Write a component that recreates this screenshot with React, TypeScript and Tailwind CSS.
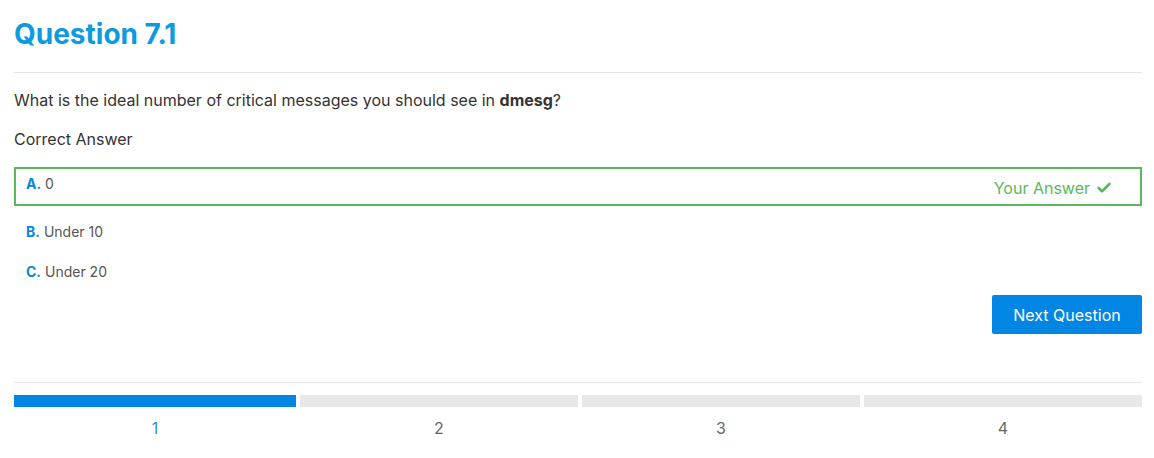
import { Check } from "lucide-react";

const answers = [
  { letter: "A", text: "0", chosen: true },
  { letter: "B", text: "Under 10", chosen: false },
  { letter: "C", text: "Under 20", chosen: false },
];

const steps = [1, 2, 3, 4];

export default function App() {
  return (
    <div className="bg-white pl-[14px] pr-[12px] font-['Inter',sans-serif] text-[#333]">
      <h1 className="pt-[16px] text-[28px] font-bold leading-[36px] text-[#0d9ade]">Question 7.1</h1>
      <hr className="mt-[20px] border-t border-[#e5e5e5]" />

      <p className="mt-[16px] text-[16px] leading-[22px]">
        What is the ideal number of critical messages you should see in <b>dmesg</b>?
      </p>
      <p className="mt-[17px] text-[16px] leading-[22px]">Correct Answer</p>

      <div className="mt-[17px] flex flex-col">
        {answers.map((a) =>
          a.chosen ? (
            <div
              key={a.letter}
              className="mb-[6px] flex h-[39px] items-start justify-between border-2 border-[#5cb85c] pl-[10px] pr-[28px]"
            >
              <span className="mt-[6px] text-[14px] leading-[18px] text-[#555]">
                <b className="text-[#0786e0]">{a.letter}.</b> {a.text}
              </span>
              <span className="mt-[9px] flex items-center gap-[6px] text-[16px] leading-[20px] text-[#5cb85c]">
                Your Answer
                <Check size={16} strokeWidth={4} />
              </span>
            </div>
          ) : (
            <div key={a.letter} className="flex h-[40px] items-center pl-[12px]">
              <span className="text-[14px] leading-[18px] text-[#555]">
                <b className="text-[#0786e0]">{a.letter}.</b> {a.text}
              </span>
            </div>
          )
        )}
      </div>

      <div className="mt-[3px] flex justify-end">
        <button className="h-[39px] w-[150px] rounded-[2px] bg-[#0286e3] text-[16px] text-white">
          Next Question
        </button>
      </div>

      <hr className="mt-[48px] border-t border-[#e5e5e5]" />

      <div className="mt-[12px] grid grid-cols-4">
        {steps.map((s) => (
          <div key={s} className={`flex flex-col items-center ${s === 1 ? "" : "ml-[4px]"}`}>
            <div className={`h-[12px] w-full ${s === 1 ? "bg-[#0286e3]" : "bg-[#e8e8e8]"}`} />
            <span className={`mt-[10px] text-[16px] leading-[22px] ${s === 1 ? "text-[#2b8fd8]" : "text-[#666]"}`}>
              {s}
            </span>
          </div>
        ))}
      </div>
    </div>
  );
}
